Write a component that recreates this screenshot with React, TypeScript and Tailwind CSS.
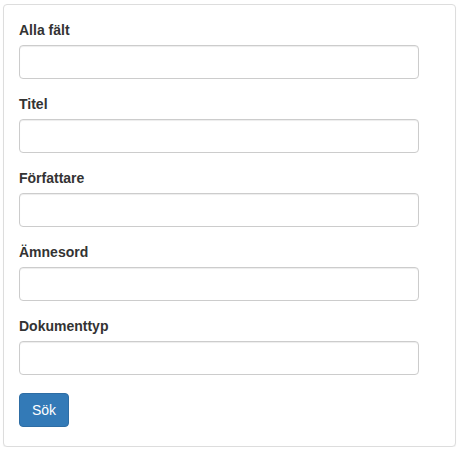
import React from 'react';

const fields = ['Alla fält', 'Titel', 'Författare', 'Ämnesord', 'Dokumenttyp'];

const App: React.FC = () => {
  return (
    <div className="bg-white pl-[3px] pt-[4px] font-['Liberation_Sans',Arial,sans-serif] text-[14px] text-[#333]">
      <div className="w-[453px] rounded-[4px] border border-[#ddd] bg-white px-[15px] pt-[15px] pb-[19px] shadow-[0_1px_1px_rgba(0,0,0,0.05)]">
        <form onSubmit={(e) => e.preventDefault()}>
          {fields.map((f) => (
            <div key={f} className="mb-[15px]">
              <label className="mb-[5px] block text-[14px] font-bold leading-[20px]">{f}</label>
              <input
                type="text"
                className="block h-[34px] w-[400px] rounded-[4px] border border-[#ccc] bg-white px-3 py-1.5 shadow-[inset_0_1px_1px_rgba(0,0,0,0.075)] outline-none"
              />
            </div>
          ))}
          <button
            type="submit"
            className="mt-[3px] h-[34px] w-[50px] rounded-[4px] border border-[#2e6da4] bg-[#337ab7] text-[14px] leading-[20px] text-white"
          >
            Sök
          </button>
        </form>
      </div>
    </div>
  );
};

export default App;
